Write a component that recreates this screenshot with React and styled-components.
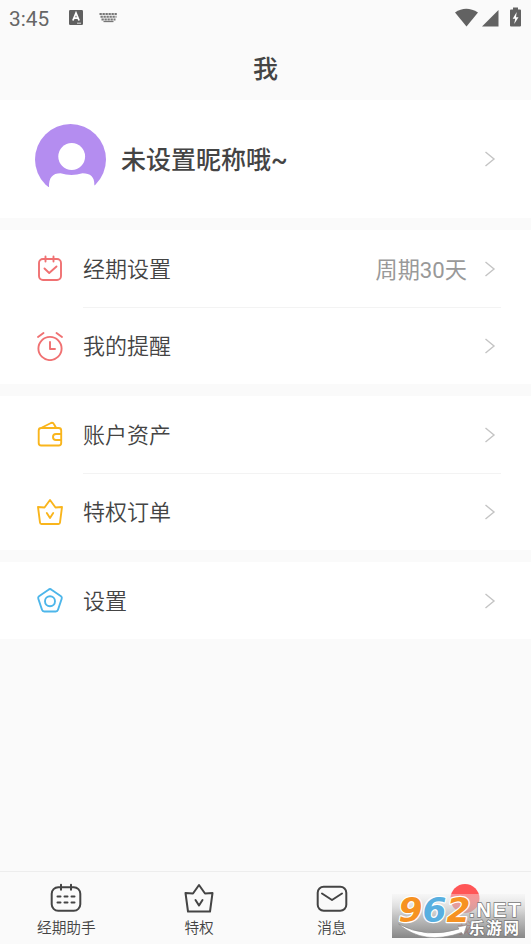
import React from "react";
import styled, { createGlobalStyle } from "styled-components";

const GlobalStyle = createGlobalStyle`
  * { box-sizing: border-box; }
  body { margin: 0; background: #fafafa; }
`;

const Screen = styled.div`
  display: flex;
  flex-direction: column;
  width: 531px;
  height: 944px;
  overflow: hidden;
  background: #fafafa;
  color: #444;
  font-family: Roboto, "Noto Sans CJK SC", sans-serif;
`;

const StatusBar = styled.div`
  display: flex;
  align-items: center;
  height: 36px;
  padding: 0 9px;
  color: #666;
`;

const Clock = styled.span`
  width: 60px;
  font-size: 20.8px;
  line-height: 36px;
  padding-top: 1px;
`;

const StatusIcons = styled.svg`
  display: block;
  flex: none;
  margin-left: ${({ $end }) => ($end ? "auto" : "0")};
  margin-right: ${({ $end }) => ($end ? "-9px" : "0")};
`;

const TitleBar = styled.h1`
  height: 64px;
  margin: 0;
  padding-top: 3px;
  text-align: center;
  font-size: 25px;
  font-weight: 500;
  line-height: 62px;
`;

const Profile = styled.section`
  display: flex;
  align-items: center;
  height: 118px;
  padding: 0 35px;
  background: #fff;
`;

const Avatar = styled.svg`
  display: block;
  width: 71px;
  height: 71px;
`;

const Nickname = styled.span`
  margin-left: 15px;
  flex: 1;
  font-size: 25px;
  font-weight: 500;
  line-height: 36px;
  padding-top: 3px;
`;

const Card = styled.section`
  margin-top: 12px;
  background: #fff;
`;

const Row = styled.div`
  display: flex;
  align-items: center;
  height: 77px;
  padding-left: 36px;
`;

const RowBody = styled.div`
  display: flex;
  align-items: center;
  flex: 1;
  height: 77px;
  margin-left: 19px;
  margin-right: 30px;
  padding-right: 5px;
  box-shadow: 0 1px 0 ${({ $divided }) => ($divided ? "#f3f3f3" : "transparent")};
`;

const Label = styled.span`
  flex: 1;
  font-size: 22px;
  font-weight: 350;
  line-height: 32px;
  padding-top: 3px;
`;

const Value = styled.span`
  margin-right: 17px;
  font-size: 22.2px;
  line-height: 32px;
  padding-top: 2px;
  color: #999;
`;

const LineIcon = styled.svg`
  display: block;
  flex: none;
  width: 28px;
  height: 30px;
  fill: none;
  stroke: ${({ $color }) => $color};
  stroke-width: 1.9;
  stroke-linecap: round;
  stroke-linejoin: round;
`;

const ChevronIcon = styled.svg`
  display: block;
  flex: none;
  fill: none;
  stroke: #c4c4c4;
  stroke-width: 1.4;
`;

const TabBar = styled.nav`
  display: grid;
  grid-template-columns: repeat(4, 1fr);
  height: 73px;
  margin-top: auto;
  border-top: 1px solid #ededed;
  position: relative;
`;

const Tab = styled.div`
  display: flex;
  flex-direction: column;
  align-items: center;
  padding-top: 10px;
  color: ${({ $active }) => ($active ? "#ff5657" : "#444")};
`;

const TabIcon = styled.svg`
  display: block;
  width: 34px;
  height: 34px;
  fill: none;
  stroke: #444;
  stroke-width: 2;
  stroke-linecap: round;
  stroke-linejoin: round;
`;

const TabLabel = styled.span`
  font-size: 14.7px;
  font-weight: 350;
  line-height: 20px;
  margin-top: 2px;
`;

const SiteBadge = styled.svg`
  position: absolute;
  right: 6px;
  bottom: 6px;
  width: 133px;
  height: 44px;
  overflow: visible;
`;

const Chevron = () => (
  <ChevronIcon width="12" height="18" viewBox="0 0 12 18">
    <path d="M1.5 2 10 9 1.5 16" />
  </ChevronIcon>
);

const icons = {
  calendar: (
    <>
      <rect x="3" y="5" width="22" height="21" rx="4" />
      <path d="M9.5 2.5v5M17.5 2.5v5M8.5 14.5l4.7 4.5 7.3-6.5" />
    </>
  ),
  alarm: (
    <>
      <circle cx="14" cy="17.5" r="11.6" />
      <path d="M14 11v7h5M2 6 7.5 2M20.5 2 26 6" />
    </>
  ),
  wallet: (
    <>
      <rect x="2.7" y="8" width="22.5" height="17.5" rx="2.5" />
      <path d="M6 7.5 15 3q2-.8 3 1.2l2 3.6M25 14h-5a3 3 0 0 0 0 6h5" />
    </>
  ),
  crown: (
    <>
      <path d="M2 10 8.5 10.5 14 3 19.5 10.5 26 10 24 25.5Q23.9 27 22.5 27H5.5Q4.1 27 4 25.5Z" />
      <path d="M10.8 16 14 21 17.2 16" />
    </>
  ),
  pentagon: (
    <>
      <path d="M12.5 3.7Q14 2.5 15.5 3.7L25 10.3Q26.2 11.2 25.7 12.7L22 23.8Q21.5 25.5 19.8 25.5H8.2Q6.5 25.5 6 23.8L2.3 12.7Q1.8 11.2 3 10.3Z" />
      <circle cx="14" cy="15.2" r="5" />
    </>
  ),
};

const groups = [
  [
    { icon: "calendar", color: "#f07172", label: "经期设置", value: "周期30天" },
    { icon: "alarm", color: "#f07172", label: "我的提醒" },
  ],
  [
    { icon: "wallet", color: "#f9b51c", label: "账户资产" },
    { icon: "crown", color: "#f9b51c", label: "特权订单" },
  ],
  [{ icon: "pentagon", color: "#4db6ea", label: "设置" }],
];

const tabs = [
  {
    label: "经期助手",
    icon: (
      <>
        <rect x="2.7" y="5.2" width="28.6" height="23.6" rx="6.5" />
        <path d="M12 2.8v5M22 2.8v5M8.5 14.5h3M15.5 14.5h3M22.5 14.5h3M8.5 20.5h3M15.5 20.5h3M22.5 20.5h3" />
      </>
    ),
  },
  {
    label: "特权",
    icon: (
      <>
        <path d="M3.5 11 11 11.5 17 3 23 11.5 30.5 11 28 29.5H6Z" />
        <path d="M13.5 18 17 23.5 20.5 18" />
      </>
    ),
  },
  {
    label: "消息",
    icon: (
      <>
        <rect x="2.7" y="4.7" width="28.6" height="24" rx="6" />
        <path d="M7 11.5 17 18 27 11.5" />
      </>
    ),
  },
  {
    label: "我",
    active: true,
    icon: <circle cx="17" cy="16.5" r="14.5" fill="#ff5657" stroke="none" />,
  },
];

const NotificationIcons = () => (
  <StatusIcons width="60" height="36" viewBox="0 0 60 36">
    <rect y="10" width="14" height="15" rx="1.2" fill="#606060" />
    <path d="M3.9 20.5 7 13 10.1 20.5M5 18.2h4" fill="none" stroke="#fff" strokeWidth="1.8" />
    <path d="M8 23.2h4" stroke="#ddd" strokeWidth="1" />
    <path d="M30.5 14h18M31.5 16.8h16M32.5 19.4h14" fill="none" stroke="#777" strokeWidth="2" strokeDasharray="2.3 .7" />
    <path d="M34.5 21.5h10" stroke="#777" strokeWidth="1.3" />
  </StatusIcons>
);

const SystemIcons = () => (
  <StatusIcons $end width="80" height="36" viewBox="451 0 80 36">
    <g fill="#626262">
      <path d="M455 12.5Q466 5 478 12.5L466.5 26.5Z" />
      <path d="M482 26.5 498.5 10V26.5Z" />
      <path d="M513 7.5h5v2h2q1 0 1 1v15q0 1-1 1h-9q-1 0-1-1v-15q0-1 1-1h2Z" />
    </g>
    <path d="M516.7 12 512.7 18.8H515.2L514.2 24 518.5 17.3H516Z" fill="#fff" />
  </StatusIcons>
);

const Watermark = () => (
  <SiteBadge viewBox="0 0 133 44">
    <defs>
      <linearGradient id="badgeShade" x1="0" y1="0" x2="0" y2="1">
        <stop offset="0" stopColor="#f0f0f0" stopOpacity=".4" />
        <stop offset=".5" stopColor="#b0b0b0" stopOpacity=".75" />
        <stop offset="1" stopColor="#777" stopOpacity=".88" />
      </linearGradient>
    </defs>
    <rect width="133" height="44" fill="url(#badgeShade)" />
    <g
      fontFamily="DejaVu Sans, sans-serif"
      fontWeight="700"
      fontStyle="italic"
      fontSize="33.5"
      stroke="#fff"
      strokeWidth="2.4"
      strokeLinejoin="round"
      paintOrder="stroke"
    >
      <text x="6.5" y="28" textLength="72" lengthAdjust="spacingAndGlyphs">
        <tspan fill="#f69222">9</tspan>
        <tspan fill="#58afe0">6</tspan>
        <tspan fill="#f69222">2</tspan>
      </text>
    </g>
    <path d="M6.5 30Q34 45 67 35L65.5 33 75 31 71.5 41 69.5 38.5Q32 52 6.5 30Z" fill="#fff" stroke="#888" strokeWidth=".6" />
    <g fill="#fff" stroke="#777" strokeWidth="1.4" paintOrder="stroke" fontWeight="700">
      <text x="77" y="22.5" fontFamily="Liberation Sans, sans-serif" fontSize="20" letterSpacing="2">.NET</text>
      <text x="77" y="39.5" fontFamily="Noto Sans CJK SC, sans-serif" fontSize="15.5" textLength="50">乐游网</text>
    </g>
  </SiteBadge>
);

export default function App() {
  return (
    <Screen>
      <GlobalStyle />
      <StatusBar>
        <Clock>3:45</Clock>
        <NotificationIcons />
        <SystemIcons />
      </StatusBar>
      <TitleBar>我</TitleBar>
      <Profile>
        <Avatar viewBox="0 0 71 71">
          <circle cx="35.5" cy="35.5" r="35.5" fill="#b48df0" />
          <circle cx="36.7" cy="32.5" r="13.4" fill="#fff" />
          <path d="M0 71V63H14Q13.5 49.3 25.5 49.3 36.5 52.5 47.5 49.3 59.5 49.3 59.3 60.5L62 71Z" fill="#fff" />
        </Avatar>
        <Nickname>未设置昵称哦~</Nickname>
        <Chevron />
      </Profile>
      {groups.map((rows) => (
        <Card key={rows[0].label}>
          {rows.map(({ icon, color, label, value }, index) => (
            <Row key={label}>
              <LineIcon $color={color} viewBox="0 0 28 30">{icons[icon]}</LineIcon>
              <RowBody $divided={index < rows.length - 1}>
                <Label>{label}</Label>
                {value && <Value>{value}</Value>}
                <Chevron />
              </RowBody>
            </Row>
          ))}
        </Card>
      ))}
      <TabBar>
        {tabs.map(({ label, icon, active }) => (
          <Tab key={label} $active={active}>
            <TabIcon viewBox="0 0 34 34">{icon}</TabIcon>
            <TabLabel>{label}</TabLabel>
          </Tab>
        ))}
        <Watermark />
      </TabBar>
    </Screen>
  );
}
